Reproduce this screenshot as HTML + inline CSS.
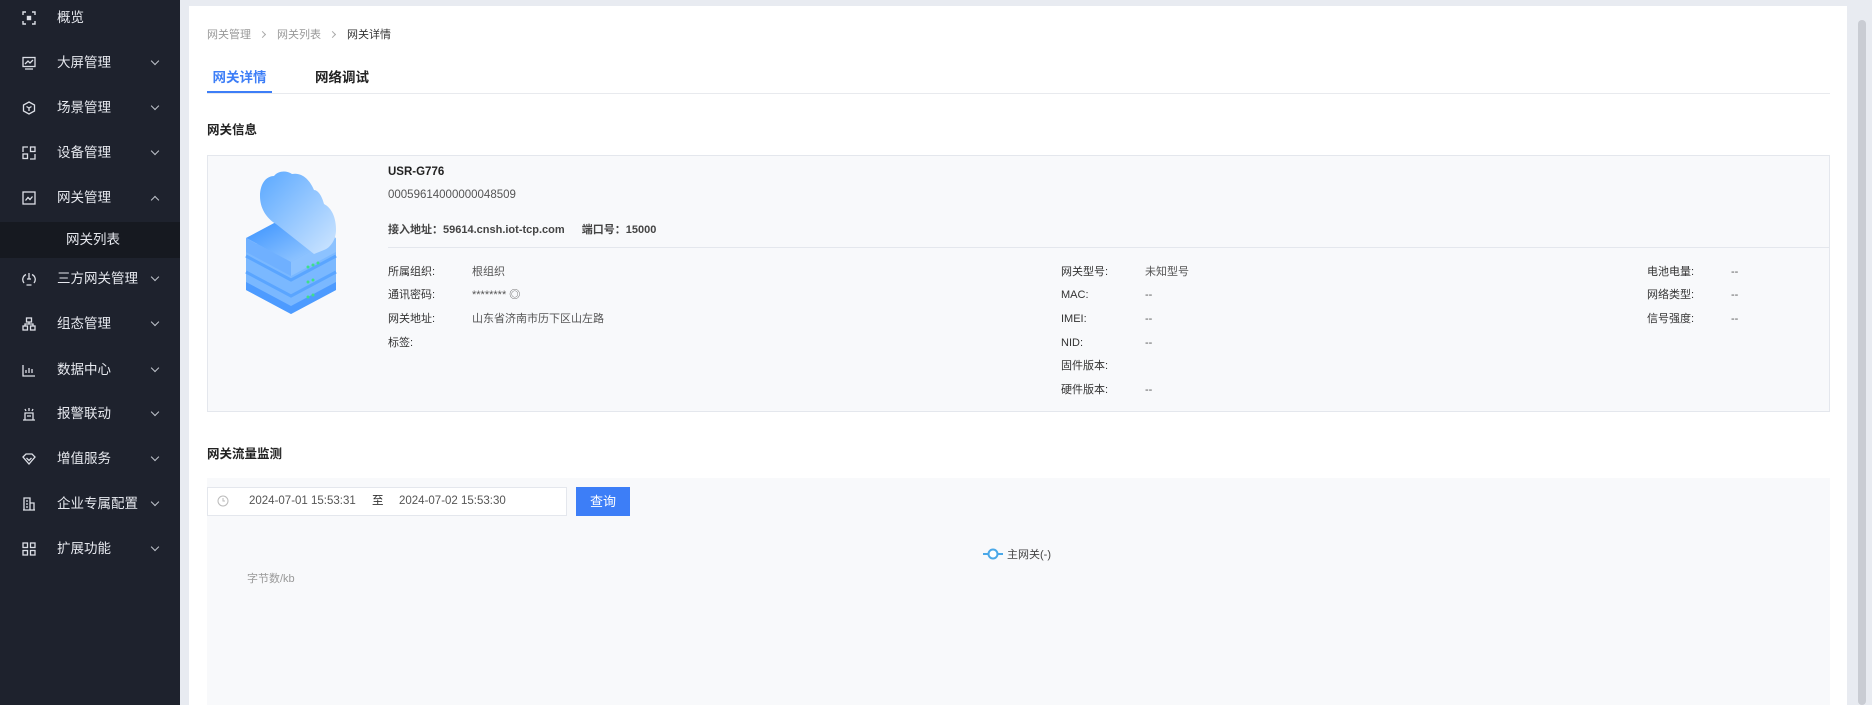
<!DOCTYPE html>
<html><head><meta charset="utf-8"><style>
*{margin:0;padding:0;box-sizing:border-box}
body{width:1872px;height:705px;overflow:hidden;background:#e8ebf1;font-family:"Liberation Sans","Noto Sans CJK SC",sans-serif;position:relative;color:#333}
.side{position:absolute;left:0;top:0;width:180px;height:705px;background:#1e222d}
.mi{position:absolute;left:0;width:180px;height:20px;color:#e6e8ee;font-size:13.5px;line-height:20px}
.mi .ic{position:absolute;left:22px;top:3px;width:14px;height:14px}
.mi .t{position:absolute;left:57px;top:0}
.mi .ar{position:absolute;left:152px;top:5px;width:6px;height:6px;border-right:1px solid #c0c4cc;border-bottom:1px solid #c0c4cc;transform:rotate(45deg)}
.mi .ar.up{transform:rotate(-135deg);top:9px}
.sub{position:absolute;left:0;top:222px;width:180px;height:36px;background:#161920;color:#e6e8ee;font-size:13.5px;line-height:36px;padding-left:66px}
.card{position:absolute;left:189px;top:6px;width:1658px;height:699px;background:#fff}
.abs{position:absolute}
.s12{font-size:11.5px}
.box{position:absolute;left:207px;top:155px;width:1623px;height:257px;background:#f8f9fb;border:1px solid #e4e7ed}
.lbl{position:absolute;font-size:11px;color:#333;line-height:14px}
.val{position:absolute;font-size:11px;color:#555;line-height:14px}
.scroll{position:absolute;left:1858px;top:20px;width:8px;height:685px;background:#c9ccd3;border-radius:4px}
.chev{display:inline-block;width:5px;height:5px;border-right:1px solid #aaa;border-top:1px solid #aaa;transform:rotate(45deg);margin:0 12px 1px 9px}
</style></head><body>
<div class="side">
 <div class="mi" style="top:8px"><svg class="ic" viewBox="0 0 14 14" fill="none" stroke="#dcdfe6" stroke-width="1.4"><path d="M1 4V1h3M10 1h3v3M13 10v3h-3M4 13H1v-3"/><rect x="5.5" y="5.5" width="3" height="3" fill="#dcdfe6"/></svg><span class="t">概览</span></div>
 <div class="mi" style="top:53px"><svg class="ic" viewBox="0 0 14 14" fill="none" stroke="#dcdfe6" stroke-width="1.3"><rect x="1" y="1.5" width="12" height="9"/><path d="M3 8l3-3 2 2 3-3M3 13h8"/></svg><span class="t">大屏管理</span><i class="ar"></i></div>
 <div class="mi" style="top:98px"><svg class="ic" viewBox="0 0 14 14" fill="none" stroke="#dcdfe6" stroke-width="1.3"><path d="M7 1l5.5 3v6L7 13 1.5 10V4z"/><path d="M4.5 5.5L7 7l2.5-1.5M7 7v3"/></svg><span class="t">场景管理</span><i class="ar"></i></div>
 <div class="mi" style="top:143px"><svg class="ic" viewBox="0 0 14 14" fill="none" stroke="#dcdfe6" stroke-width="1.3"><rect x="1" y="8" width="4.5" height="4.5"/><rect x="8.5" y="1" width="4.5" height="4.5"/><path d="M1 6V1h5M13 8v5H8"/></svg><span class="t">设备管理</span><i class="ar"></i></div>
 <div class="mi" style="top:188px"><svg class="ic" viewBox="0 0 14 14" fill="none" stroke="#dcdfe6" stroke-width="1.3"><rect x="1" y="1" width="12" height="12"/><path d="M3.5 9.5l2.5-3 2 2 2.5-3"/></svg><span class="t">网关管理</span><i class="ar up"></i></div>
 <div class="sub">网关列表</div>
 <div class="mi" style="top:269px"><svg class="ic" viewBox="0 0 14 14" fill="none" stroke="#dcdfe6" stroke-width="1.3"><path d="M4 2.5A5.5 5.5 0 0 0 2 11M10 2.5A5.5 5.5 0 0 1 12 11M4.5 13h5M7 1v6M5 7h4"/></svg><span class="t">三方网关管理</span><i class="ar"></i></div>
 <div class="mi" style="top:314px"><svg class="ic" viewBox="0 0 14 14" fill="none" stroke="#dcdfe6" stroke-width="1.3"><rect x="4.5" y="1" width="5" height="4"/><rect x="1" y="9" width="4.5" height="4"/><rect x="8.5" y="9" width="4.5" height="4"/><path d="M7 5v2M3 9V7h8v2"/></svg><span class="t">组态管理</span><i class="ar"></i></div>
 <div class="mi" style="top:360px"><svg class="ic" viewBox="0 0 14 14" fill="none" stroke="#dcdfe6" stroke-width="1.3"><path d="M1 2v11h12M4 10V7M7 10V5M10 10V6"/></svg><span class="t">数据中心</span><i class="ar"></i></div>
 <div class="mi" style="top:404px"><svg class="ic" viewBox="0 0 14 14" fill="none" stroke="#dcdfe6" stroke-width="1.3"><path d="M1 13h12M3 13V6h8v7M7 1v3M3 2l1 2M11 2l-1 2M5 9h4"/></svg><span class="t">报警联动</span><i class="ar"></i></div>
 <div class="mi" style="top:449px"><svg class="ic" viewBox="0 0 14 14" fill="none" stroke="#dcdfe6" stroke-width="1.3"><path d="M1 5l3-3h6l3 3-6 7z"/><path d="M4.5 6L7 8.5 9.5 6"/></svg><span class="t">增值服务</span><i class="ar"></i></div>
 <div class="mi" style="top:494px"><svg class="ic" viewBox="0 0 14 14" fill="none" stroke="#dcdfe6" stroke-width="1.3"><path d="M2 13V1h6v12M8 6h4v7M1 13h12M4 4h2M4 7h2M4 10h2"/></svg><span class="t">企业专属配置</span><i class="ar"></i></div>
 <div class="mi" style="top:539px"><svg class="ic" viewBox="0 0 14 14" fill="none" stroke="#dcdfe6" stroke-width="1.3"><rect x="1" y="1" width="4.5" height="4.5"/><rect x="8.5" y="1" width="4.5" height="4.5"/><rect x="1" y="8.5" width="4.5" height="4.5"/><rect x="8.5" y="8.5" width="4.5" height="4.5"/></svg><span class="t">扩展功能</span><i class="ar"></i></div>
</div>

<div class="card"></div>
<div class="abs" style="left:207px;top:26px;color:#999;font-size:11px">网关管理<i class="chev"></i>网关列表<i class="chev"></i><span style="color:#333">网关详情</span></div>
<div class="abs" style="left:207px;top:66px;width:65px;text-align:center;font-size:13.5px;font-weight:bold;color:#3d7ef7">网关详情</div>
<div class="abs" style="left:207px;top:91px;width:65px;height:3px;background:#3d7ef7"></div>
<div class="abs" style="left:315px;top:66px;font-size:13.5px;font-weight:bold;color:#222">网络调试</div>
<div class="abs" style="left:207px;top:93px;width:1623px;height:1px;background:#e8eaee"></div>
<div class="abs" style="left:207px;top:119px;font-size:12.5px;font-weight:bold;color:#222">网关信息</div>

<div class="box"></div>
<svg class="abs" style="left:240px;top:170px" width="105" height="145" viewBox="0 0 105 145">
<defs><linearGradient id="g1" x1="0" y1="0" x2="1" y2="1"><stop offset="0" stop-color="#2f8cff"/><stop offset="1" stop-color="#a9d3ff"/></linearGradient>
<linearGradient id="g2" x1="0" y1="0" x2="1" y2="1"><stop offset="0" stop-color="#5aa8ff"/><stop offset="1" stop-color="#cfe6ff"/></linearGradient></defs>
<path d="M6 80l45-24 45 24v40l-45 24-45-24z" fill="#7ab8ff"/>
<path d="M6 120l45 24 45-24v-8l-45 24-45-24z" fill="#4d9bff"/>
<path d="M6 102l45 24 45-24" fill="none" stroke="#5aa5ff" stroke-width="3"/>
<path d="M6 86l45 24 45-24" fill="none" stroke="#5aa5ff" stroke-width="3"/>
<path d="M6 68l45-24 45 24-45 24z" fill="url(#g1)"/>
<path d="M6 68l45 24v14L6 82z" fill="#6fb0ff"/><path d="M51 92l45-24v14l-45 24z" fill="#8cc2ff"/>
<path d="M36 54C26 48 20 38 20 26c0-12 6-20 14-20 4-5 12-6 18-2 10-2 18 6 22 16 4 0 8 6 10 14 8 4 12 14 12 26 0 10-6 18-12 20l-10 4z" fill="url(#g2)"/>
<circle cx="68" cy="97" r="1.5" fill="#3de08a"/><circle cx="73" cy="95" r="1.5" fill="#3de08a"/><circle cx="78" cy="93" r="1.5" fill="#3de08a"/><circle cx="68" cy="112" r="1.5" fill="#3de08a"/><circle cx="73" cy="110" r="1.5" fill="#3de08a"/><circle cx="68" cy="127" r="1.5" fill="#3de08a"/><circle cx="73" cy="125" r="1.5" fill="#3de08a"/>
</svg>
<div class="abs" style="left:388px;top:166px;font-size:11.5px;font-weight:bold;color:#222">USR-G776</div>
<div class="abs" style="left:388px;top:189px;font-size:11.5px;color:#555">00059614000000048509</div>
<div class="abs" style="left:388px;top:221px;font-size:11px;font-weight:bold;color:#444">接入地址：59614.cnsh.iot-tcp.com <span style="margin-left:14px">端口号：15000</span></div>
<div class="abs" style="left:388px;top:247px;width:1441px;height:1px;background:#e4e7ed"></div>

<div class="lbl" style="left:388px;top:265px">所属组织:</div><div class="val" style="left:472px;top:265px">根组织</div>
<div class="lbl" style="left:388px;top:288px">通讯密码:</div><div class="val" style="left:472px;top:288px">******** ◎</div>
<div class="lbl" style="left:388px;top:312px">网关地址:</div><div class="val" style="left:472px;top:312px">山东省济南市历下区山左路</div>
<div class="lbl" style="left:388px;top:336px">标签:</div>

<div class="lbl" style="left:1061px;top:265px">网关型号:</div><div class="val" style="left:1145px;top:265px">未知型号</div>
<div class="lbl" style="left:1061px;top:288px">MAC:</div><div class="val" style="left:1145px;top:288px">--</div>
<div class="lbl" style="left:1061px;top:312px">IMEI:</div><div class="val" style="left:1145px;top:312px">--</div>
<div class="lbl" style="left:1061px;top:336px">NID:</div><div class="val" style="left:1145px;top:336px">--</div>
<div class="lbl" style="left:1061px;top:359px">固件版本:</div>
<div class="lbl" style="left:1061px;top:383px">硬件版本:</div><div class="val" style="left:1145px;top:383px">--</div>

<div class="lbl" style="left:1647px;top:265px">电池电量:</div><div class="val" style="left:1731px;top:265px">--</div>
<div class="lbl" style="left:1647px;top:288px">网络类型:</div><div class="val" style="left:1731px;top:288px">--</div>
<div class="lbl" style="left:1647px;top:312px">信号强度:</div><div class="val" style="left:1731px;top:312px">--</div>

<div class="abs" style="left:207px;top:443px;font-size:12.5px;font-weight:bold;color:#222">网关流量监测</div>
<div class="abs" style="left:207px;top:478px;width:1623px;height:227px;background:#f8f9fb"></div>
<div class="abs" style="left:207px;top:487px;width:360px;height:29px;background:#fff;border:1px solid #e4e7ed;font-size:11.5px;color:#555;line-height:27px">
 <svg class="abs" style="left:9px;top:7px" width="12" height="12" viewBox="0 0 12 12" fill="none" stroke="#bbb"><circle cx="6" cy="6" r="5"/><path d="M6 3v3h2"/></svg>
 <span class="abs" style="left:41px">2024-07-01 15:53:31</span><span class="abs" style="left:164px;color:#333">至</span><span class="abs" style="left:191px">2024-07-02 15:53:30</span></div>
<div class="abs" style="left:576px;top:487px;width:54px;height:29px;background:#3d7ef7;color:#fff;font-size:13px;line-height:29px;text-align:center">查询</div>
<svg class="abs" style="left:983px;top:548px" width="20" height="12" viewBox="0 0 20 12"><path d="M0 6h20" stroke="#4aa8e8" stroke-width="2"/><circle cx="10" cy="6" r="4.5" fill="#fff" stroke="#4aa8e8" stroke-width="2"/></svg>
<div class="abs" style="left:1007px;top:546px;font-size:11px;color:#444">主网关(-)</div>
<div class="abs" style="left:247px;top:570px;font-size:11px;color:#999">字节数/kb</div>
<div class="scroll"></div>
</body></html>
